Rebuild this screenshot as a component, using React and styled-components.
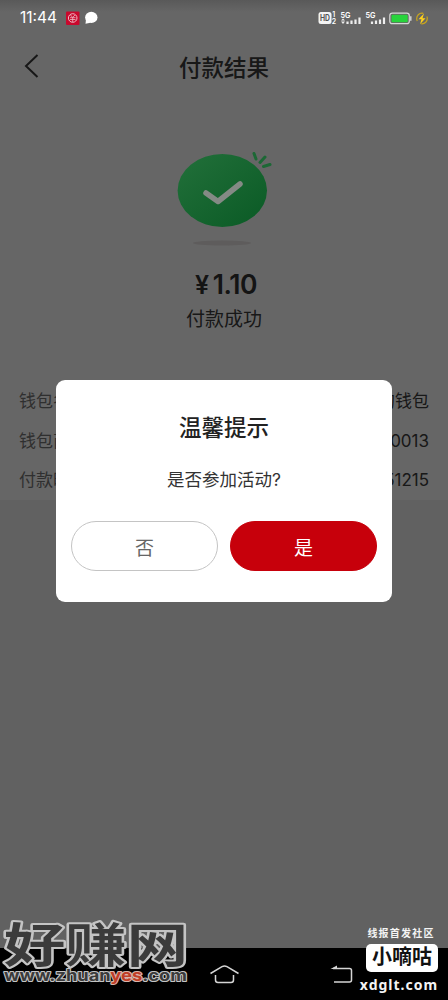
import React from 'react'
import styled, { createGlobalStyle } from 'styled-components'

const rows = [
  { label: '钱包名称', value: '我的钱包' },
  { label: '钱包商户', value: '0013' },
  { label: '付款时间', value: '151215' },
]

function StatusIcons() {
  return (
    <svg width="114" height="18" viewBox="316 8 114 18">
      <rect x="318.500" y="11" width="13" height="12" rx="2.500" fill="#f4f4f4" />
      <text x="320" y="20.300" fontSize="8.500" fontWeight="700" textLength="10" lengthAdjust="spacingAndGlyphs" fill="#555">HD</text>
      <text x="332.300" y="16.300" fontSize="7" fontWeight="600" fill="#fff">1</text>
      <text x="331.800" y="23.300" fontSize="7" fontWeight="600" fill="#fff">2</text>
      <text x="340.500" y="17" fontSize="8" fontWeight="600" textLength="10" lengthAdjust="spacingAndGlyphs" fill="#fff">5G</text>
      <path d="M341 19.500h4l-2-2zM341 20.500h4l-2 2.500z" fill="#eee" />
      <path d="M347.500 23v-2.500M351.500 23v-3.500M355.500 23v-4.500M359.500 23v-6.500" stroke="#eee" strokeWidth="2.200" />
      <text x="365.500" y="17" fontSize="8" fontWeight="600" textLength="10" lengthAdjust="spacingAndGlyphs" fill="#fff">5G</text>
      <path d="M372 23v-2.500M376 23v-3.500M380 23v-4.500M384 23v-6.500" stroke="#eee" strokeWidth="2.200" />
      <rect x="389.800" y="12.200" width="19.500" height="10.500" rx="2.500" fill="none" stroke="#d8d8d8" strokeWidth="1.200" />
      <rect x="391.500" y="13.700" width="16.200" height="7.500" rx="1" fill="#28d43c" />
      <path d="M410.800 15.200v4.500" stroke="#d8d8d8" strokeWidth="1.400" />
      <circle cx="422" cy="17.500" r="5.300" fill="none" stroke="#c9a51c" strokeWidth="1.200" strokeDasharray="12 4.650" strokeDashoffset="3" />
      <path d="M424 12.500l-5.500 5.800h3l-1.500 5 5.500-6h-3z" fill="#ffd21c" />
    </svg>
  )
}

function SuccessImage() {
  return (
    <Picture width="110" height="100" viewBox="169 148 110 100">
      <defs>
        <linearGradient id="green" x1="0" y1="0" x2="1" y2="1">
          <stop offset="0" stopColor="#22703a" />
          <stop offset="1" stopColor="#0a5a25" />
        </linearGradient>
      </defs>
      <ellipse cx="222" cy="243" rx="29" ry="2.500" fill="#5e5c5c" />
      <ellipse cx="222.300" cy="190.500" rx="44.700" ry="36.500" fill="url(#green)" />
      <path d="M206 193l12 8.500 22-17.500" fill="none" stroke="#848a85" strokeWidth="5.500" strokeLinecap="round" strokeLinejoin="round" />
      <path d="M256 159l-2-5.500M260 162.500l5-5.500M263.500 166.500l6.500-2" stroke="#1c6835" strokeWidth="3" strokeLinecap="round" />
    </Picture>
  )
}

function App() {
  return (
    <>
      <GlobalStyle />
      <Screen>
        <StatusBar>
          <Clock>11:44</Clock>
          <svg width="34" height="16" viewBox="65 9 34 16">
            <rect x="66" y="10.500" width="13.500" height="13.500" rx="1" fill="#c9082d" />
            <circle cx="72.700" cy="17" r="4.300" fill="none" stroke="#eeb9c3" strokeWidth="1" />
            <path d="M70.500 14l2.200 2.500 2.200-2.500M70 16.700h5.500M70 18.500h5.500M72.700 16.500v4.500" fill="none" stroke="#eeb9c3" strokeWidth=".8" />
            <ellipse cx="91.300" cy="16.400" rx="6.200" ry="5.600" fill="#fff" />
            <path d="M86 18.500l-.5 4.300 5-1z" fill="#fff" />
          </svg>
          <Spacer />
          <StatusIcons />
        </StatusBar>
        <Header>
          <BackIcon width="16" height="26" viewBox="0 0 16 26">
            <path d="M14.500 2L3 13l11.500 11" fill="none" stroke="#3a3a3a" strokeWidth="2" />
          </BackIcon>
          <Title>付款结果</Title>
        </Header>
        <Result>
          <SuccessImage />
          <Amount><Yen>¥</Yen>1.10</Amount>
          <ResultText>付款成功</ResultText>
        </Result>
        <Details>
          {rows.map((row) => (
            <Row key={row.label}>
              <Label>{row.label}</Label>
              <span>{row.value}</span>
            </Row>
          ))}
        </Details>
        <Mask>
          <Dialog>
            <DialogTitle>温馨提示</DialogTitle>
            <DialogText>是否参加活动?</DialogText>
            <Buttons>
              <Button>否</Button>
              <Button $primary>是</Button>
            </Buttons>
          </Dialog>
        </Mask>
        <NavBar>
          <svg width="30" height="20" viewBox="209 963 30 20">
            <path d="M210.500 972.500L222 965.700q2.500-1.300 5 0l11.500 6.800M215.500 974v5q0 2.500 2.500 2.500h13q2.500 0 2.500-2.500v-5" fill="none" stroke="#d5d5d5" strokeWidth="1.500" />
          </svg>
          <BackKey width="23" height="20" viewBox="330 963 23 20">
            <path d="M333 967.500h16.500q2 0 2 2v9.500q0 2-2 2H334" fill="none" stroke="#d5d5d5" strokeWidth="1.500" />
            <path d="M330.500 968l6.500-3.500v3.500z" fill="#d5d5d5" />
          </BackKey>
        </NavBar>
        <SiteMark width="192" height="86" viewBox="0 902 192 86">
          <g fill="#3b3b3b" stroke="#c4c4c4" strokeLinejoin="round" paintOrder="stroke">
            <text x="4" y="961.500" fontSize="47" fontWeight="700" strokeWidth="4" textLength="184" lengthAdjust="spacingAndGlyphs">好赚网</text>
            <text x="4" y="981" fontSize="15.500" fontWeight="700" strokeWidth="2" textLength="183" lengthAdjust="spacingAndGlyphs">
              www.zhuan<tspan fill="#c03d26" stroke="#d9b5ac">yes</tspan>.com
            </text>
          </g>
        </SiteMark>
        <ForumMark>
          <Slogan>线报首发社区</Slogan>
          <Badge>小嘀咕</Badge>
          <Domain>xdglt.com</Domain>
        </ForumMark>
      </Screen>
    </>
  )
}

const GlobalStyle = createGlobalStyle`
body{
  margin:0;
  font-family:Inter, "Noto Sans CJK SC", sans-serif;
}
*{
  box-sizing:border-box;
}
`
const Screen = styled.div`
position:relative;
width:448px;
height:1000px;
overflow:hidden;
display:flex;
flex-direction:column;
background:#f2f2f2;
color:#3c3c3c;
`
const StatusBar = styled.div`
position:relative;
z-index:2;
height:36px;
flex-shrink:0;
display:flex;
align-items:center;
padding:0 18px 0 20px;
background:linear-gradient(#595959, #666 12px);
`
const Clock = styled.span`
width:45px;
color:#fff;
font-size:15.500px;
line-height:36px;
`
const Spacer = styled.div`
flex:1;
`
const Header = styled.div`
height:64px;
flex-shrink:0;
display:flex;
align-items:center;
padding:0 23px;
background:#fff;
`
const BackIcon = styled.svg`
margin-top:-4px;
`
const Title = styled.h1`
flex:1;
margin:0 16px 4px 0;
text-align:center;
font-size:22.500px;
font-weight:500;
`
const Result = styled.div`
height:264px;
flex-shrink:0;
display:flex;
flex-direction:column;
align-items:center;
padding-top:48px;
background:#fff;
`
const Picture = styled.svg`
position:relative;
z-index:1;
`
const Amount = styled.div`
margin:18px 0 0 4px;
font-size:26.500px;
font-weight:600;
line-height:36px;
letter-spacing:-.4px;
color:#333;
`
const Yen = styled.span`
margin-right:4px;
font-size:25px;
`
const ResultText = styled.div`
margin-top:3px;
font-size:19px;
line-height:28px;
`
const Details = styled.div`
height:136px;
padding:17px 19px 0;
background:#fefefe;
`
const Row = styled.div`
display:flex;
justify-content:space-between;
height:39.500px;
font-size:17px;
line-height:40px;
`
const Label = styled.span`
color:#777;
`
const Mask = styled.div`
position:absolute;
inset:0 0 52px;
padding-top:34px;
display:flex;
align-items:center;
justify-content:center;
background:rgba(0,0,0,.6);
`
const Dialog = styled.div`
width:336px;
height:222px;
padding:32px 15px 0;
border-radius:9px;
background:#fff;
text-align:center;
`
const DialogTitle = styled.div`
font-size:22.500px;
font-weight:500;
line-height:32px;
color:#222;
`
const DialogText = styled.div`
margin-top:23px;
font-size:17.500px;
line-height:26px;
color:#333;
`
const Buttons = styled.div`
display:flex;
gap:12px;
margin-top:28px;
`
const Button = styled.button`
flex:1;
height:50px;
padding:0;
border:1px solid ${(p) => (p.$primary ? '#c7000b' : '#c4c4c4')};
border-radius:25px;
background:${(p) => (p.$primary ? '#c7000b' : '#fff')};
color:${(p) => (p.$primary ? '#fff' : '#666')};
font-family:inherit;
font-size:19px;
`
const NavBar = styled.div`
height:52px;
flex-shrink:0;
margin-top:auto;
display:flex;
align-items:center;
padding-left:209px;
background:#000;
`
const BackKey = styled.svg`
margin-left:91px;
`
const SiteMark = styled.svg`
position:absolute;
left:0;
bottom:12px;
`
const ForumMark = styled.div`
position:absolute;
right:7px;
bottom:5px;
width:84px;
display:flex;
flex-direction:column;
align-items:center;
color:#f4f4f4;
`
const Slogan = styled.div`
margin-left:4px;
font-size:10px;
font-weight:700;
line-height:16px;
letter-spacing:1.200px;
white-space:nowrap;
`
const Badge = styled.div`
width:72px;
height:28px;
margin:3px 0 3px 6px;
border-radius:5px;
background:#fff;
color:#111;
text-align:center;
font-size:20px;
font-weight:700;
line-height:27px;
`
const Domain = styled.div`
font-family:"Noto Sans", sans-serif;
font-size:14px;
font-weight:700;
line-height:20px;
letter-spacing:1px;
`

export default App
